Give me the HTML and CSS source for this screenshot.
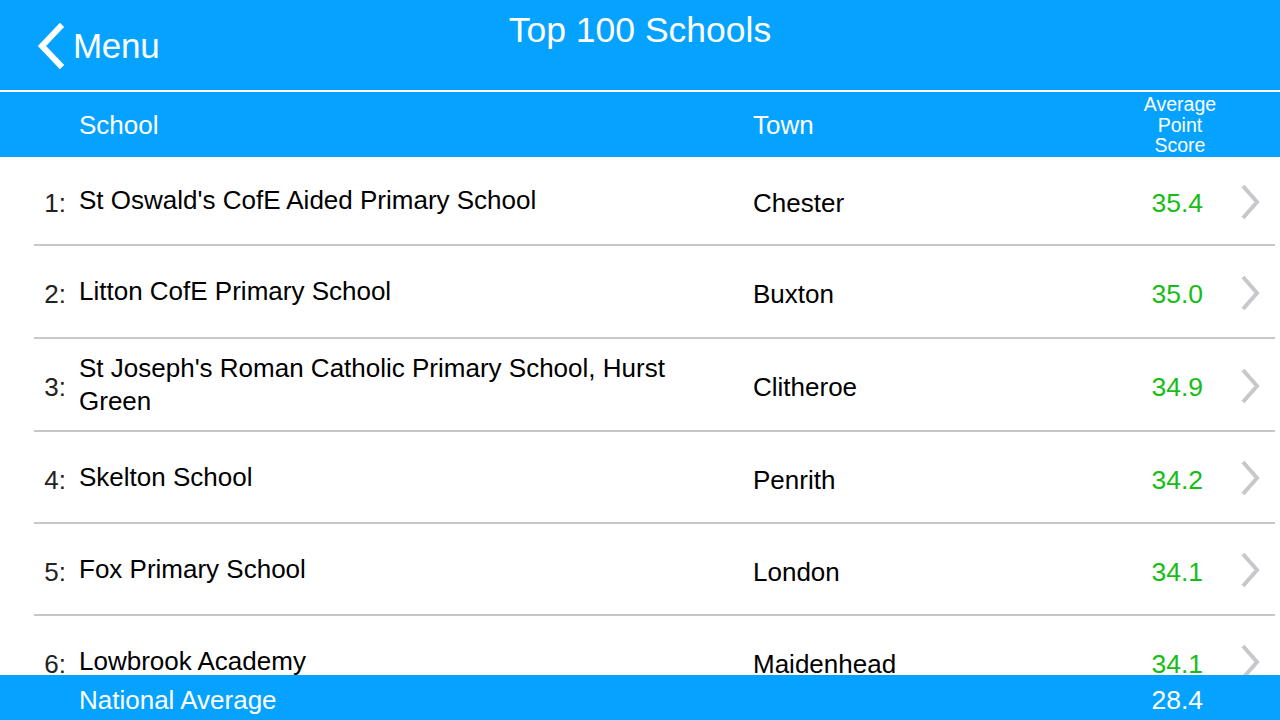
FILE: index.html
```html
<!DOCTYPE html>
<html lang="en">
<head>
<meta charset="utf-8">
<title>Top 100 Schools</title>
<link rel="stylesheet" href="styles.css">
</head>
<body>
<div class="app">
  <header class="topbar">
    <div class="back">
      <svg class="back-icon" width="32" height="46" viewBox="0 0 32 46" aria-hidden="true">
        <polyline points="24,4 6,23 24,42" fill="none" stroke="#fff" stroke-width="6" stroke-linecap="square" stroke-linejoin="miter"/>
      </svg>
      <span class="back-label">Menu</span>
    </div>
    <h1 class="title">Top 100 Schools</h1>
    <div class="spacer"></div>
  </header>

  <div class="colhead">
    <div></div>
    <div class="colhead-school">School</div>
    <div class="colhead-town">Town</div>
    <div class="colhead-score">Average<br>Point<br>Score</div>
    <div></div>
  </div>

  <main class="list">
    <div class="row row-first">
      <div class="rank">1:</div>
      <div class="name">St Oswald's CofE Aided Primary School</div>
      <div class="town">Chester</div>
      <div class="score">35.4</div>
      <div class="chev"><svg width="22" height="36" viewBox="0 0 22 36"><polyline points="4,2 18,18 4,34" fill="none" stroke="#c8c8cc" stroke-width="4"/></svg></div>
    </div>
    <div class="row row-tall">
      <div class="rank">2:</div>
      <div class="name">Litton CofE Primary School</div>
      <div class="town">Buxton</div>
      <div class="score">35.0</div>
      <div class="chev"><svg width="22" height="36" viewBox="0 0 22 36"><polyline points="4,2 18,18 4,34" fill="none" stroke="#c8c8cc" stroke-width="4"/></svg></div>
    </div>
    <div class="row row-tall">
      <div class="rank">3:</div>
      <div class="name">St Joseph's Roman Catholic Primary School, Hurst Green</div>
      <div class="town">Clitheroe</div>
      <div class="score">34.9</div>
      <div class="chev"><svg width="22" height="36" viewBox="0 0 22 36"><polyline points="4,2 18,18 4,34" fill="none" stroke="#c8c8cc" stroke-width="4"/></svg></div>
    </div>
    <div class="row">
      <div class="rank">4:</div>
      <div class="name">Skelton School</div>
      <div class="town">Penrith</div>
      <div class="score">34.2</div>
      <div class="chev"><svg width="22" height="36" viewBox="0 0 22 36"><polyline points="4,2 18,18 4,34" fill="none" stroke="#c8c8cc" stroke-width="4"/></svg></div>
    </div>
    <div class="row">
      <div class="rank">5:</div>
      <div class="name">Fox Primary School</div>
      <div class="town">London</div>
      <div class="score">34.1</div>
      <div class="chev"><svg width="22" height="36" viewBox="0 0 22 36"><polyline points="4,2 18,18 4,34" fill="none" stroke="#c8c8cc" stroke-width="4"/></svg></div>
    </div>
    <div class="row">
      <div class="rank">6:</div>
      <div class="name">Lowbrook Academy</div>
      <div class="town">Maidenhead</div>
      <div class="score">34.1</div>
      <div class="chev"><svg width="22" height="36" viewBox="0 0 22 36"><polyline points="4,2 18,18 4,34" fill="none" stroke="#c8c8cc" stroke-width="4"/></svg></div>
    </div>
  </main>

  <footer class="footer">
    <div></div>
    <div class="footer-label">National Average</div>
    <div></div>
    <div class="footer-score">28.4</div>
    <div></div>
  </footer>
</div>
</body>
</html>
```

FILE: styles.css
```css
* { box-sizing: border-box; }

html, body {
  margin: 0;
  padding: 0;
  width: 1280px;
  height: 720px;
  overflow: hidden;
  background: #ffffff;
  font-family: "Liberation Sans", Arial, sans-serif;
}

.app {
  width: 1280px;
  height: 720px;
  display: flex;
  flex-direction: column;
}

.topbar {
  flex: 0 0 92px;
  background: #05a3ff;
  border-bottom: 2px solid #ffffff;
  display: grid;
  grid-template-columns: 1fr auto 1fr;
  color: #ffffff;
}

.back {
  display: flex;
  align-items: center;
  padding-left: 36px;
  padding-top: 2px;
  height: 90px;
}

.back-icon { display: block; margin-right: 5px; }

.back-label {
  font-size: 35px;
  letter-spacing: -0.3px;
}

.title {
  margin: 0;
  font-weight: normal;
  font-size: 35.5px;
  padding-top: 10px;
  line-height: 40px;
  letter-spacing: 0;
}

.colhead {
  flex: 0 0 65px;
  background: #05a3ff;
  color: #ffffff;
  display: grid;
  grid-template-columns: 79px 674px 1fr 80px 60px;
  align-items: center;
}

.colhead-school,
.colhead-town {
  font-size: 26px;
  padding-top: 2px;
}

.colhead-score {
  font-size: 19.5px;
  line-height: 20.5px;
  text-align: center;
  padding-top: 1px;
}

.list {
  flex: 1 1 auto;
  overflow: hidden;
}

.row {
  margin: 0 5px 0 34px;
  height: 92px;
  border-bottom: 2px solid #c8c8cc;
  display: grid;
  grid-template-columns: 45px 674px 360px 90px 72px;
  align-items: center;
  color: #000000;
  font-size: 26px;
}

.row-first { height: 89px; }
.row-tall { height: 93px; }

.rank {
  text-align: right;
  padding-right: 13px;
  padding-top: 6px;
  color: #222;
}

.name {
  line-height: 33px;
  padding-right: 40px;
}

.town { padding-top: 6px; }

.score {
  text-align: right;
  color: #16bd16;
  padding-top: 6px;
  font-size: 26.5px;
}

.chev {
  display: flex;
  justify-content: flex-end;
  padding-right: 14px;
  padding-top: 2px;
}

.chev svg { display: block; }

.footer {
  flex: 0 0 45px;
  background: #05a3ff;
  color: #ffffff;
  display: grid;
  grid-template-columns: 79px 674px 360px 90px 1fr;
  align-items: center;
  font-size: 26px;
}

.footer-label,
.footer-score { padding-top: 5px; }

.footer-score { text-align: right; font-size: 26.5px; }
```
